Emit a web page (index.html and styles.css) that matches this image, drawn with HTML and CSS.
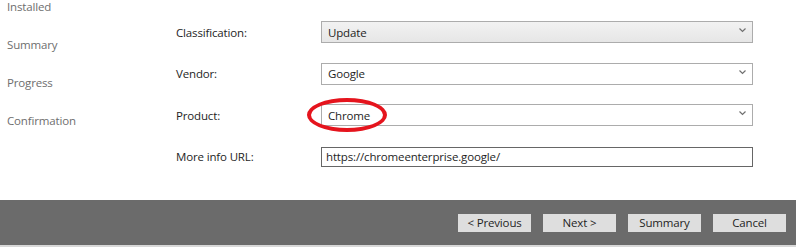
FILE: index.html
```html
<!DOCTYPE html>
<html lang="en">
<head>
  <meta charset="UTF-8" />
  <title>Software Update Wizard</title>
  <link rel="stylesheet" href="styles.css">
</head>
<body>

  <div class="wizard">
    <ul class="steps">
      <li>Installed</li>
      <li>Summary</li>
      <li>Progress</li>
      <li>Confirmation</li>
    </ul>

    <div class="form">
      <label>Classification:</label>
      <div class="combo combo-raised">
        <span>Update</span>
        <svg class="chevron" width="7" height="5" viewBox="0 0 7 5"><polyline points="0.5,0.5 3.5,3.5 6.5,0.5" fill="none" stroke="#707070" stroke-width="1.2"/></svg>
      </div>

      <label>Vendor:</label>
      <div class="combo">
        <span>Google</span>
        <svg class="chevron" width="7" height="5" viewBox="0 0 7 5"><polyline points="0.5,0.5 3.5,3.5 6.5,0.5" fill="none" stroke="#707070" stroke-width="1.2"/></svg>
      </div>

      <label>Product:</label>
      <div class="combo">
        <span class="marked">Chrome</span>
        <svg class="chevron" width="7" height="5" viewBox="0 0 7 5"><polyline points="0.5,0.5 3.5,3.5 6.5,0.5" fill="none" stroke="#707070" stroke-width="1.2"/></svg>
      </div>

      <label>More info URL:</label>
      <div class="textbox">https://chromeenterprise.google/</div>
    </div>
  </div>

  <div class="buttons">
    <button>&lt; Previous</button>
    <button>Next &gt;</button>
    <button>Summary</button>
    <button>Cancel</button>
  </div>
  <div class="edge"></div>

</body>
</html>
```

FILE: styles.css
```css
body {
  margin: 0;
  background: #fff;
  font-family: "Segoe UI", "Open Sans", sans-serif;
  font-size: 11.5px;
  letter-spacing: -0.15px;
  color: #1e1e1e;
  overflow: hidden;
}

.wizard {
  display: flex;
  height: 200px;
}

/* left step list, scrolled a bit so the first item is cut */
.steps {
  list-style: none;
  margin: -12px 0 0;
  padding: 0 0 0 7px;
  width: 169px;
  color: #6e6e6e;
}

.steps li {
  height: 38px;
  line-height: 38px;
}

.form {
  display: grid;
  grid-template-columns: 145px 432px;
  grid-auto-rows: 22px;
  row-gap: 19.5px;
  align-items: center;
  padding-top: 21px;
}

.combo {
  height: 22px;
  box-sizing: border-box;
  border: 1px solid #acacac;
  background: #fff;
  display: flex;
  align-items: center;
  justify-content: space-between;
  padding: 0 6px 0 6px;
}

.combo-raised {
  background: linear-gradient(#f2f2f2, #e6e6e6);
}

.chevron {
  margin-bottom: 3px;
}

/* red hand-drawn ring round the product name */
.marked {
  position: relative;
}

.marked::before {
  content: "";
  position: absolute;
  left: -21px;
  top: -10px;
  width: 72px;
  height: 26px;
  border: 4px solid #e5141d;
  border-radius: 50%;
}

.textbox {
  height: 20px;
  box-sizing: border-box;
  border: 1px solid #666;
  padding: 0 4px;
  line-height: 18px;
}

.buttons {
  height: 45px;
  background: #6b6b6b;
  display: flex;
  justify-content: flex-end;
  align-items: center;
  gap: 12px;
  padding-right: 10px;
}

.buttons button {
  width: 73px;
  height: 18px;
  border: none;
  background: #dedede;
  font-family: inherit;
  font-size: 11.5px;
  letter-spacing: -0.15px;
  color: #1e1e1e;
  padding: 0;
}

.edge {
  height: 2px;
  background: #d8d8d8;
}
```
